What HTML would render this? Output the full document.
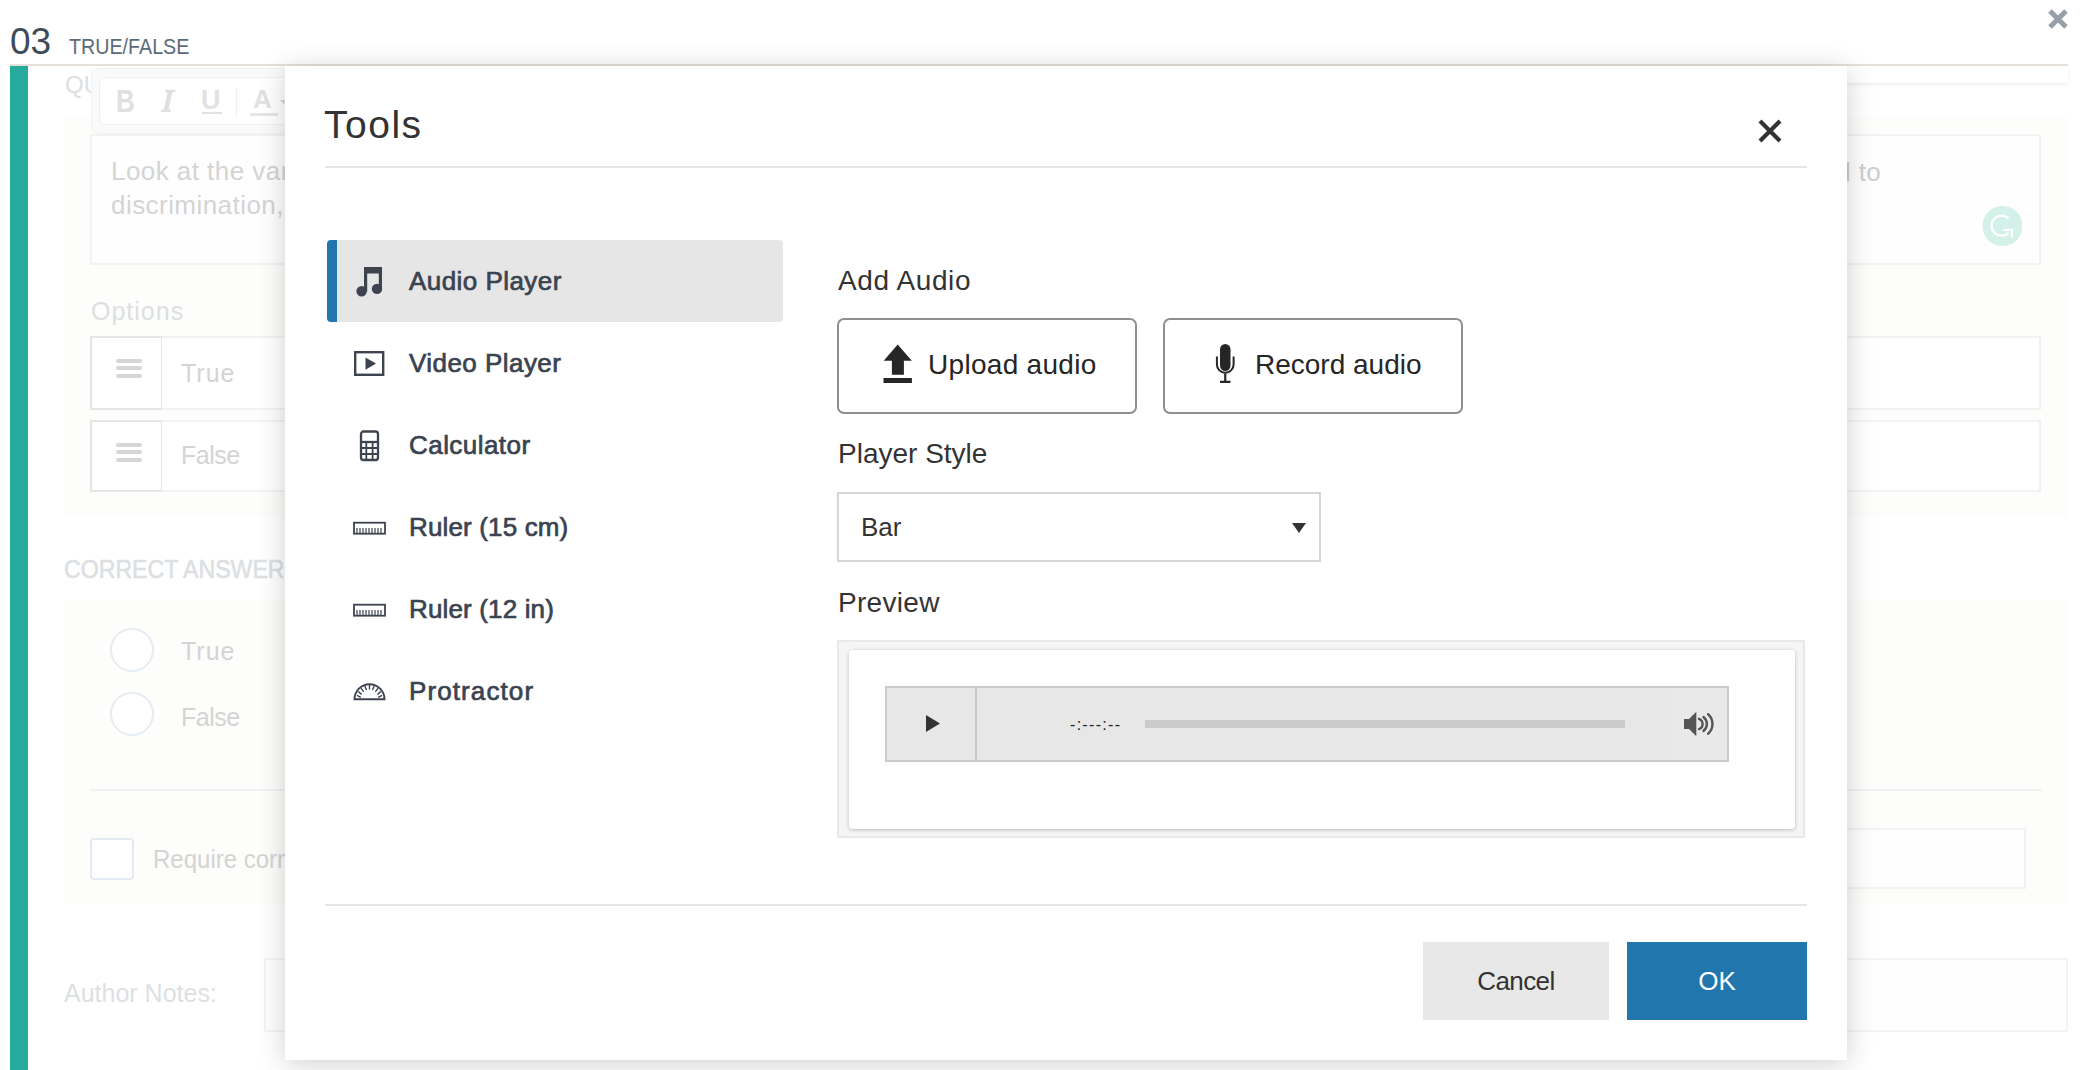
<!DOCTYPE html>
<html><head><meta charset="utf-8">
<style>
*{margin:0;padding:0;box-sizing:border-box}
html,body{width:2096px;height:1070px;overflow:hidden;background:#fff;font-family:"Liberation Sans",sans-serif}
.a{position:absolute}
.t{position:absolute;white-space:nowrap;line-height:1}
</style></head><body>

<!-- ===== background page ===== -->
<div class="t" style="left:10px;top:23px;font-size:37px;color:#3e4b59">03</div>
<div class="t" style="left:69px;top:36px;font-size:22px;color:#5b6b7a;transform:scaleX(0.895);transform-origin:0 0">TRUE/FALSE</div>
<svg class="a" style="left:2046px;top:7px" width="24" height="24" viewBox="0 0 24 24"><path d="M4 4L20 20M20 4L4 20" stroke="#97a0a9" stroke-width="5"/></svg>

<div class="a" style="left:10px;top:64px;width:2058px;height:2px;background:#e6e0da"></div>
<div class="a" style="left:10px;top:66px;width:18px;height:1004px;background:#25aa9b"></div>
<div class="a" style="left:1840px;top:66px;width:228px;height:17px;box-shadow:0 2px 3px rgba(180,190,200,.25)"></div>

<!-- card content faded -->
<div class="t" style="left:65px;top:73px;font-size:24px;color:#dcdfe3">QUESTION</div>

<div class="a" style="left:64px;top:116px;width:2004px;height:402px;background:#fdfdfb"></div>
<div class="a" style="left:91px;top:68px;width:1300px;height:66px;border-radius:8px;background:#fafafa;border:1px solid #f2f2f2"></div>
<div class="a" style="left:99px;top:77px;width:1200px;height:48px;border-radius:7px;background:#fff;border:1px solid #f0f0f0"></div>
<div class="t" style="left:116px;top:86px;font-size:28px;font-weight:bold;color:#e0e0e0;transform:scale(0.93,1.13);transform-origin:0 0">B</div>
<svg class="a" style="left:160px;top:89px" width="18" height="24" viewBox="0 0 18 24"><path d="M5.5 0.8H15.5L15 3.2H12.3L8.6 20.5H11.2L10.7 22.9H0.7L1.2 20.5H3.9L7.6 3.2H5Z" fill="#e0e0e0"/></svg>
<div class="t" style="left:201px;top:87px;font-size:27px;font-weight:bold;color:#e2e2e2">U</div>
<div class="a" style="left:202px;top:112px;width:20px;height:2px;background:#e2e2e2"></div>
<div class="a" style="left:236px;top:88px;width:1px;height:29px;background:#eeeeee"></div>
<div class="t" style="left:253px;top:86px;font-size:26px;font-weight:bold;color:#e2e2e2">A</div>
<div class="a" style="left:250px;top:113px;width:28px;height:3px;background:#e6e6e6"></div>
<svg class="a" style="left:280px;top:100px" width="8" height="6" viewBox="0 0 8 6"><path d="M0 0H7L3.5 4Z" fill="#d8d8d8"/></svg>
<div class="a" style="left:90px;top:134px;width:1951px;height:131px;background:#fefefe;border:2px solid #f3f3f3"></div>
<div class="t" style="left:111px;top:158px;font-size:26px;color:#d4d4d4;letter-spacing:0.45px">Look at the various forms of discrimination and prejudice described and decide whether each one is related to</div>
<div class="t" style="left:111px;top:192px;font-size:26px;color:#d4d4d4;letter-spacing:0.45px">discrimination, prejudice</div>
<svg class="a" style="left:1982px;top:206px" width="40" height="40" viewBox="0 0 40 40"><circle cx="20.5" cy="20" r="20" fill="#d3f1e9"/>
 <path d="M26.6 12.6A10 10 0 1 0 26.6 26.8" fill="none" stroke="#fff" stroke-width="2.3"/><path d="M22.3 23.8H30V30.5" fill="none" stroke="#fff" stroke-width="2.3" stroke-linecap="round"/></svg>
<div class="t" style="left:1830px;top:159px;font-size:26px;color:#cdcdcd;letter-spacing:0.4px">ld to</div>

<div class="t" style="left:91px;top:299px;font-size:25px;color:#dcdfe3;letter-spacing:1px">Options</div>
<div class="a" style="left:90px;top:336px;width:73px;height:74px;border:2px solid #e5e5e5;background:#fff"></div>
<div class="a" style="left:162px;top:336px;width:1879px;height:74px;border:2px solid #f2f2f2;border-left:none;background:#fff"></div>
<div class="a" style="left:90px;top:420px;width:73px;height:72px;border:2px solid #e5e5e5;background:#fff"></div>
<div class="a" style="left:162px;top:420px;width:1879px;height:72px;border:2px solid #f2f2f2;border-left:none;background:#fff"></div>
<div class="a" style="left:116px;top:359px;width:26px;height:4px;border-radius:2px;background:#d6d6d6"></div>
<div class="a" style="left:116px;top:366px;width:26px;height:4px;border-radius:2px;background:#d6d6d6"></div>
<div class="a" style="left:116px;top:374px;width:26px;height:4px;border-radius:2px;background:#d6d6d6"></div>
<div class="a" style="left:116px;top:443px;width:26px;height:4px;border-radius:2px;background:#d6d6d6"></div>
<div class="a" style="left:116px;top:450px;width:26px;height:4px;border-radius:2px;background:#d6d6d6"></div>
<div class="a" style="left:116px;top:458px;width:26px;height:4px;border-radius:2px;background:#d6d6d6"></div>
<div class="t" style="left:181px;top:361px;font-size:25px;color:#d4d4d4;letter-spacing:1px">True</div>
<div class="t" style="left:181px;top:443px;font-size:25px;color:#d4d4d4;letter-spacing:-0.5px">False</div>

<div class="t" style="left:64px;top:557px;font-size:25px;color:#dcdfe3;transform:scaleX(0.925);transform-origin:0 0;-webkit-text-stroke:0.6px #dcdfe3">CORRECT ANSWER</div>
<div class="a" style="left:64px;top:600px;width:2002px;height:304px;background:#fdfdfb"></div>
<div class="a" style="left:110px;top:628px;width:44px;height:44px;border-radius:50%;border:2px solid #e6ecf4;background:#fff"></div>
<div class="a" style="left:110px;top:692px;width:44px;height:44px;border-radius:50%;border:2px solid #e6ecf4;background:#fff"></div>
<div class="t" style="left:181px;top:639px;font-size:25px;color:#d4d4d4;letter-spacing:1px">True</div>
<div class="t" style="left:181px;top:705px;font-size:25px;color:#d4d4d4;letter-spacing:-0.5px">False</div>
<div class="a" style="left:90px;top:789px;width:1952px;height:2px;background:#f2f2f2"></div>
<div class="a" style="left:90px;top:838px;width:44px;height:42px;border-radius:4px;border:2px solid #e3eaf3;background:#fff"></div>
<div class="t" style="left:153px;top:847px;font-size:25px;color:#d4d4d4;transform:scaleX(0.96);transform-origin:0 0">Require correct</div>
<div class="a" style="left:1700px;top:828px;width:326px;height:61px;border:2px solid #f2f2f2;background:#fefefe"></div>

<div class="t" style="left:64px;top:981px;font-size:25px;color:#dcdfe3">Author Notes:</div>
<div class="a" style="left:264px;top:958px;width:1804px;height:74px;border:2px solid #f3f3f3;background:#fefefe"></div>

<!-- ===== modal ===== -->
<div class="a" style="left:285px;top:66px;width:1562px;height:994px;background:#fff;box-shadow:0 4px 26px rgba(0,0,0,.19)"></div>

<div class="t" style="left:324px;top:105px;font-size:39px;color:#333;letter-spacing:1.5px">Tools</div>
<svg class="a" style="left:1756px;top:117px" width="28" height="28" viewBox="0 0 28 28"><path d="M4 4L24 24M24 4L4 24" stroke="#333" stroke-width="4.2"/></svg>
<div class="a" style="left:325px;top:166px;width:1482px;height:2px;background:#e5e5e5"></div>

<!-- nav -->
<div class="a" style="left:327px;top:240px;width:456px;height:82px;background:#e6e6e6;border-radius:4px;border-left:10px solid #2176ae"></div>
<div class="t" style="left:409px;top:267.5px;font-size:26px;color:#3a4350;-webkit-text-stroke:0.7px #3a4350;letter-spacing:0.45px">Audio Player</div>
<div class="t" style="left:409px;top:349.5px;font-size:26px;color:#3a4350;-webkit-text-stroke:0.7px #3a4350;letter-spacing:0.45px">Video Player</div>
<div class="t" style="left:409px;top:431.5px;font-size:26px;color:#3a4350;-webkit-text-stroke:0.7px #3a4350;letter-spacing:0.45px">Calculator</div>
<div class="t" style="left:409px;top:513.5px;font-size:26px;color:#3a4350;-webkit-text-stroke:0.7px #3a4350;letter-spacing:0.15px">Ruler (15 cm)</div>
<div class="t" style="left:409px;top:595.5px;font-size:26px;color:#3a4350;-webkit-text-stroke:0.7px #3a4350;letter-spacing:0.15px">Ruler (12 in)</div>
<div class="t" style="left:409px;top:677.5px;font-size:26px;color:#3a4350;-webkit-text-stroke:0.7px #3a4350;letter-spacing:1.1px">Protractor</div>

<!-- icons -->
<svg class="a" style="left:354px;top:265px" width="32" height="34" viewBox="0 0 32 34">
 <rect x="10" y="2" width="18" height="6.5" fill="#3d4450"/>
 <rect x="10" y="2" width="3.2" height="24.5" fill="#3d4450"/>
 <rect x="24.8" y="2" width="3.2" height="22" fill="#3d4450"/>
 <circle cx="7.6" cy="26.2" r="5.2" fill="#3d4450"/>
 <circle cx="23" cy="23.9" r="5.2" fill="#3d4450"/>
</svg>
<svg class="a" style="left:353px;top:350px" width="34" height="28" viewBox="0 0 34 28">
 <rect x="2.2" y="2.2" width="28" height="22.6" fill="none" stroke="#3d4450" stroke-width="2.4"/>
 <path d="M12.5 7.5L23 13.5L12.5 19.8Z" fill="#3d4450"/>
</svg>
<svg class="a" style="left:359px;top:430px" width="22" height="32" viewBox="0 0 22 32">
 <rect x="2" y="1.5" width="17" height="28.5" rx="2.5" fill="none" stroke="#3d4450" stroke-width="2.3"/>
 <path d="M2 12H19" stroke="#3d4450" stroke-width="2.3"/>
 <path d="M7.3 12V30M13.6 12V30M2 18H19M2 24H19" stroke="#3d4450" stroke-width="1.8"/>
</svg>
<svg class="a" style="left:352px;top:520px" width="35" height="16" viewBox="0 0 35 16">
 <rect x="2" y="2.7" width="31" height="11" fill="none" stroke="#3d4450" stroke-width="1.8"/>
 <path d="M5 8V13M8 8V13M11 8V13M14 8V13M17 8V13M20 8V13M23 8V13M26 8V13M29 8V13" stroke="#3d4450" stroke-width="1.2"/>
</svg>
<svg class="a" style="left:352px;top:602px" width="35" height="16" viewBox="0 0 35 16">
 <rect x="2" y="2.7" width="31" height="11" fill="none" stroke="#3d4450" stroke-width="1.8"/>
 <path d="M5 8V13M8 8V13M11 8V13M14 8V13M17 8V13M20 8V13M23 8V13M26 8V13M29 8V13" stroke="#3d4450" stroke-width="1.2"/>
</svg>
<svg class="a" style="left:352px;top:682px" width="35" height="20" viewBox="0 0 35 20">
 <path d="M2.5 17.2A15 15 0 0 1 32.5 17.2Z" fill="none" stroke="#3d4450" stroke-width="1.9"/>
 <g stroke="#3d4450" stroke-width="1.4" stroke-linecap="round">
  <path d="M5.5 13.6L8.3 15.1M6.7 9.9L9.2 12.1M9.3 6.6L11.3 9.3M13 4.2L14.3 7.5M17.5 3.3V6.9M22 4.2L20.7 7.5M25.7 6.6L23.7 9.3M28.3 9.9L25.8 12.1M29.5 13.6L26.7 15.1"/>
 </g>
</svg>

<!-- right content -->
<div class="t" style="left:838px;top:267px;font-size:28px;color:#333;letter-spacing:0.6px">Add Audio</div>

<div class="a" style="left:837px;top:318px;width:300px;height:96px;border:2px solid #8f8f8f;border-radius:7px"></div>
<svg class="a" style="left:882px;top:344px" width="32" height="40" viewBox="0 0 32 40">
 <path d="M15.7 0.5L29.8 16.8H21.9V30.8H9.9V16.8H1.7Z" fill="#262626"/>
 <rect x="1.5" y="34" width="28.4" height="5" fill="#262626"/>
</svg>
<div class="t" style="left:928px;top:351px;font-size:28px;color:#262626;letter-spacing:0.3px">Upload audio</div>

<div class="a" style="left:1163px;top:318px;width:300px;height:96px;border:2px solid #8f8f8f;border-radius:7px"></div>
<svg class="a" style="left:1213px;top:343px" width="24" height="42" viewBox="0 0 24 42">
 <rect x="7" y="1" width="10.5" height="27" rx="5.25" fill="#262626"/>
 <path d="M3.9 13.5V21.5A8.35 8.35 0 0 0 20.6 21.5V13.5" fill="none" stroke="#262626" stroke-width="2"/>
 <path d="M12.25 30.5V38M7 38.8H17.5" stroke="#262626" stroke-width="2.2"/>
</svg>
<div class="t" style="left:1255px;top:351px;font-size:28px;color:#262626">Record audio</div>

<div class="t" style="left:838px;top:440px;font-size:28px;color:#333">Player Style</div>
<div class="a" style="left:837px;top:492px;width:484px;height:70px;border:2px solid #d6d6d6;background:#fff"></div>
<div class="t" style="left:861px;top:514px;font-size:26px;color:#333">Bar</div>
<svg class="a" style="left:1290px;top:521px" width="18" height="14" viewBox="0 0 18 14"><path d="M2 2H16L9 12Z" fill="#333"/></svg>

<div class="t" style="left:838px;top:589px;font-size:28px;color:#333;letter-spacing:0.3px">Preview</div>
<div class="a" style="left:837px;top:640px;width:968px;height:198px;border:2px solid #e8e8e8;background:#f6f5f3"></div>
<div class="a" style="left:849px;top:650px;width:946px;height:179px;background:#fff;border-radius:4px;box-shadow:0 1px 4px rgba(0,0,0,.22)"></div>
<div class="a" style="left:885px;top:686px;width:844px;height:76px;border:2px solid #c9c9c9;background:#e7e7e7"></div>
<div class="a" style="left:1671px;top:688px;width:56px;height:72px;background:#e9e9e9"></div>
<div class="a" style="left:975px;top:688px;width:2px;height:72px;background:#c9c9c9"></div>
<svg class="a" style="left:924px;top:713px" width="18" height="21" viewBox="0 0 18 21"><path d="M2 2L16 10.5L2 19Z" fill="#333"/></svg>
<div class="t" style="left:1070px;top:717px;font-size:16px;color:#222;letter-spacing:1.3px">-:---:--</div>
<div class="a" style="left:1145px;top:720px;width:480px;height:8px;background:#cbcbcb"></div>
<svg class="a" style="left:1682px;top:710px" width="36" height="28" viewBox="0 0 36 28">
 <path d="M2 9H7L14.3 1.7V26.3L7 19H2Z" fill="#555"/>
 <g fill="none" stroke="#555" stroke-width="2.4" stroke-linecap="round">
  <path d="M17 8.8A5.56 5.56 0 0 1 17 19.2"/>
  <path d="M21.5 7A9 9 0 0 1 21.5 21"/>
  <path d="M26 4.2A13 13 0 0 1 26 23.8"/>
 </g>
</svg>

<!-- footer -->
<div class="a" style="left:325px;top:904px;width:1482px;height:2px;background:#e5e5e5"></div>
<div class="a" style="left:1423px;top:942px;width:186px;height:78px;background:#e8e8e8"></div>
<div class="t" style="left:1423px;top:968px;width:186px;text-align:center;font-size:26px;color:#333;letter-spacing:-0.6px">Cancel</div>
<div class="a" style="left:1627px;top:942px;width:180px;height:78px;background:#2176ae"></div>
<div class="t" style="left:1627px;top:968px;width:180px;text-align:center;font-size:26px;color:#fff">OK</div>

</body></html>
